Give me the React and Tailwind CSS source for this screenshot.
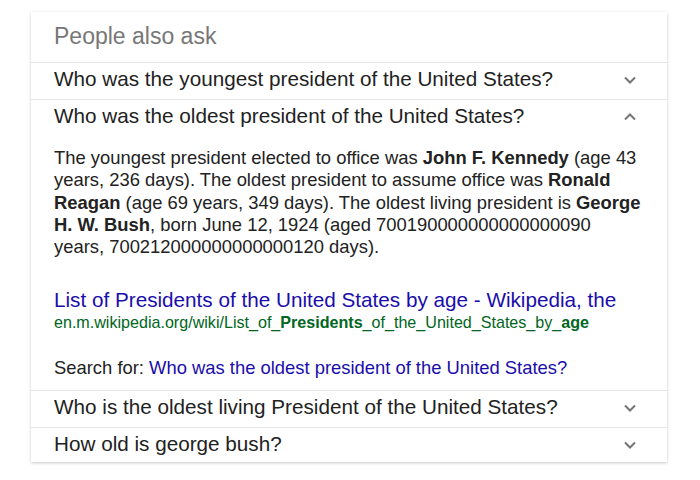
import React from "react";

const font = { fontFamily: '"Liberation Sans", Arial, sans-serif' };

function Chevron({ up }) {
  return (
    <svg width="12" height="8" viewBox="0 0 12 8" className="shrink-0 mt-[2px]">
      <polyline
        points={up ? "1,6.5 6,1.5 11,6.5" : "1,1.5 6,6.5 11,1.5"}
        fill="none"
        stroke="#757575"
        strokeWidth="2"
      />
    </svg>
  );
}

function Row({ q, up, last }) {
  return (
    <div className={`border-t border-[#e6e6e6] pl-[23px] pr-[31px] pt-[4px] ${last ? "pb-[6px]" : "pb-[8px]"} flex items-center justify-between`}>
      <span className="text-[20.7px] leading-[24px] text-[#222]">{q}</span>
      <Chevron up={up} />
    </div>
  );
}

export default function App() {
  return (
    <div className="w-[700px] h-[480px] bg-white pt-[12px] pl-[31px]" style={font}>
      <div className="w-[636px] bg-white shadow-[0_1px_3px_rgba(0,0,0,0.22)]">
        <div className="pl-[23px] pt-[10px] pb-[12px] text-[23px] leading-[28px] text-[#777]">
          People also ask
        </div>
        <Row q="Who was the youngest president of the United States?" />
        <Row q="Who was the oldest president of the United States?" up />
        <div className="pl-[23px] pr-[23px] pt-[11px] pb-[11px]">
          <p className="text-[18.4px] leading-[22.3px] text-[#222]">
            The youngest president elected to office was <b>John F. Kennedy</b> (age 43 years, 236 days). The oldest president to assume office was <b>Ronald Reagan</b> (age 69 years, 349 days). The oldest living president is <b>George H. W. Bush</b>, born June 12, 1924 (aged 700190000000000000090 years, 700212000000000000120 days).
          </p>
          <div className="mt-[30px] text-[20.7px] leading-[24px] text-[#1a0dab] whitespace-nowrap overflow-hidden">
            List of Presidents of the United States by age - Wikipedia, the
          </div>
          <div className="text-[16.1px] leading-[20px] text-[#006621] whitespace-nowrap">
            en.m.wikipedia.org/wiki/List_of_<b>Presidents</b>_of_the_United_States_by_<b>age</b>
          </div>
          <div className="mt-[25px] text-[18.4px] leading-[22px] text-[#222]">
            Search for: <span className="text-[#1a0dab]">Who was the oldest president of the United States?</span>
          </div>
        </div>
        <Row q="Who is the oldest living President of the United States?" />
        <Row q="How old is george bush?" last />
      </div>
    </div>
  );
}
